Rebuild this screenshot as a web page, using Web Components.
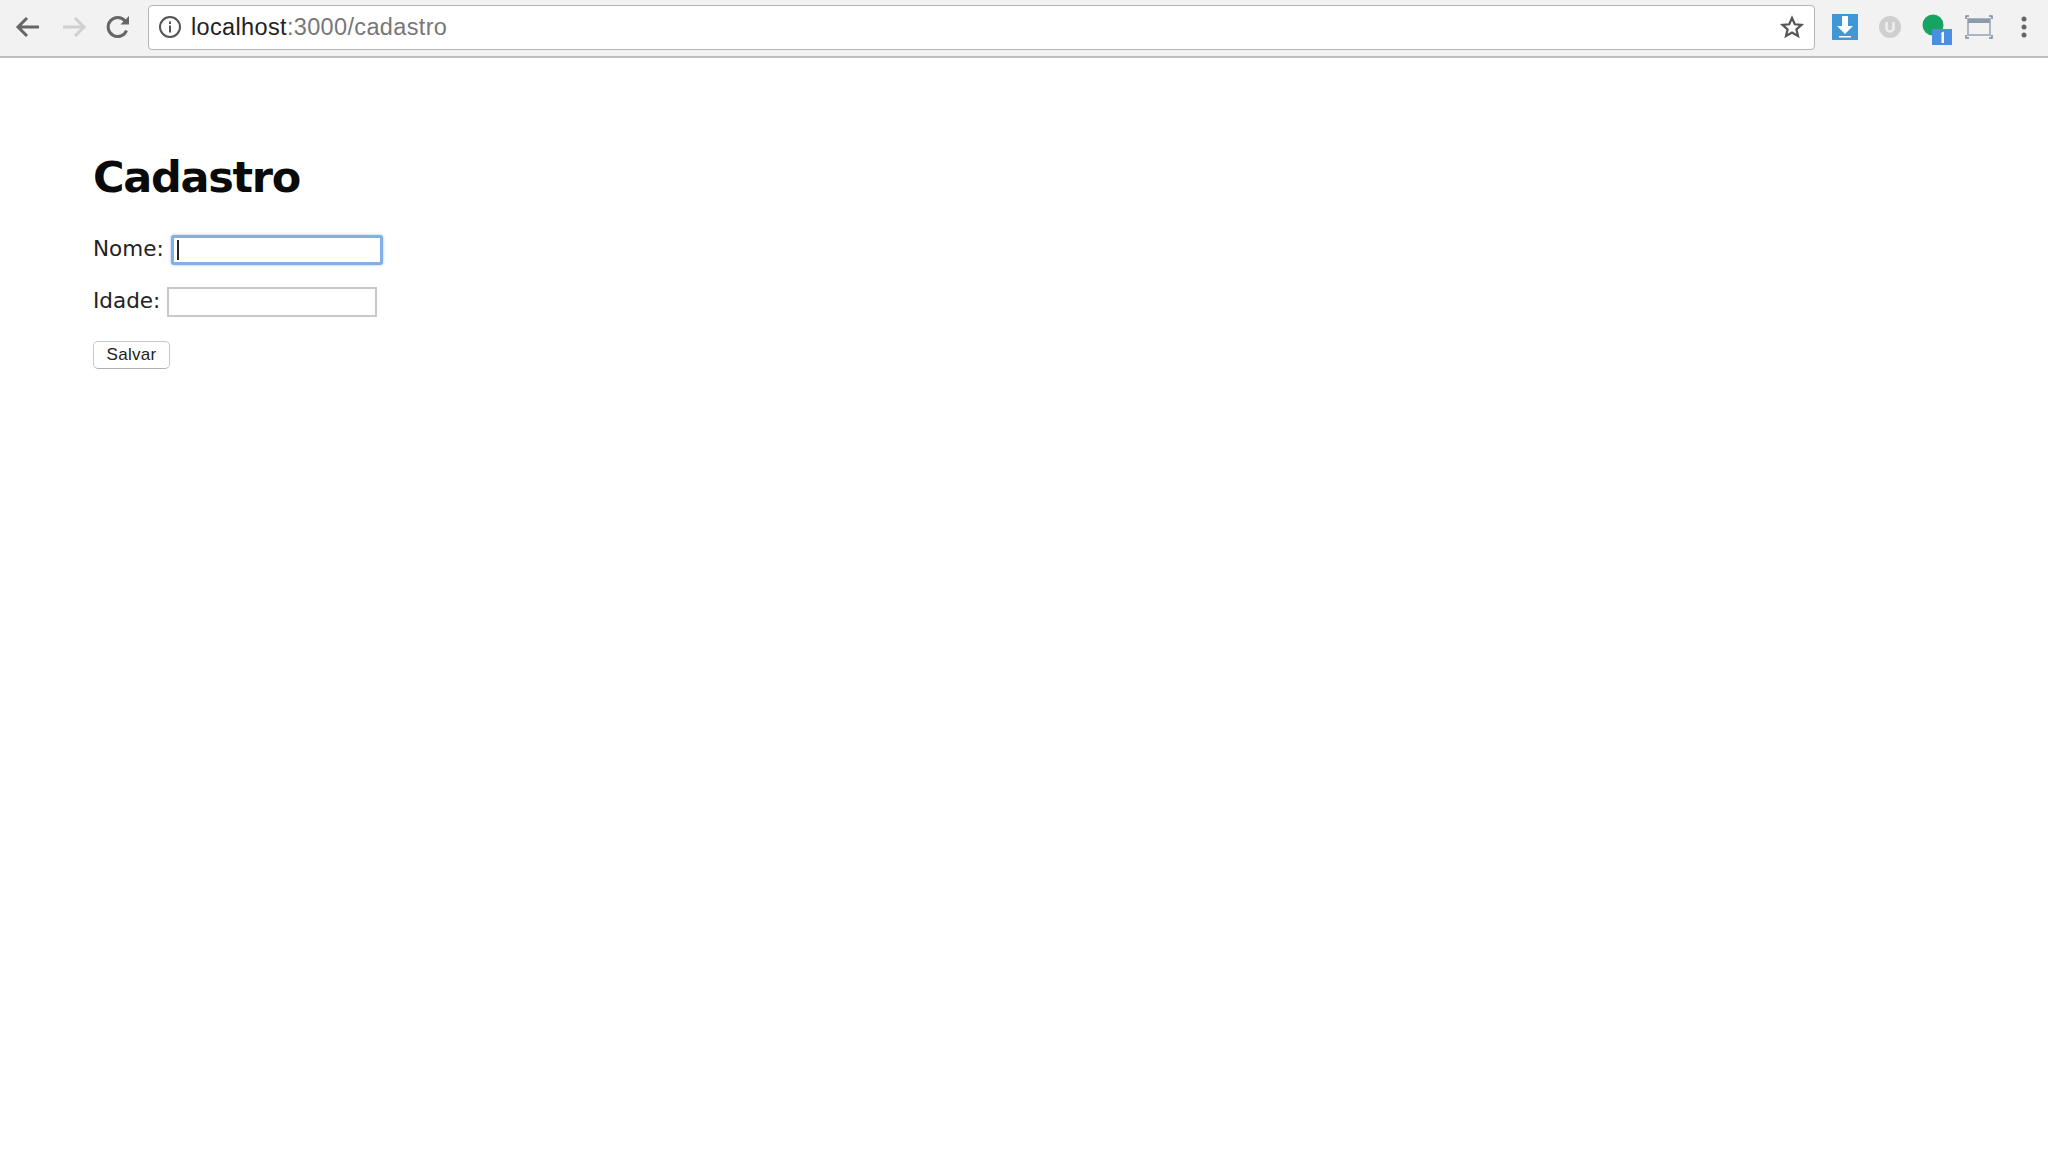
<!DOCTYPE html>
<html>
<head>
<meta charset="utf-8">
<title>Cadastro</title>
<style>
    html, body { margin: 0; background: #fff; }
    body { font-family: "DejaVu Sans", sans-serif; }
</style>
</head>
<body>
<browser-toolbar url-host="localhost" url-path=":3000/cadastro"></browser-toolbar>
<cadastro-page>
    <form-field label="Nome:" focused></form-field>
    <form-field label="Idade:"></form-field>
    <save-button>Salvar</save-button>
</cadastro-page>

<script>
const toolbarTemplate = document.createElement('template');
toolbarTemplate.innerHTML = `
<style>
    :host {
        display: flex;
        align-items: center;
        box-sizing: border-box;
        height: 58px;
        padding: 0 0 2px 0;
        background: #f2f2f2;
        border-bottom: 2px solid #bdbdbd;
    }
    .nav { display: flex; align-items: center; width: 148px; flex: none; padding-left: 12px; box-sizing: border-box; }
    .nav svg, .ext svg { display: block; flex: none; }
    .omnibox {
        flex: 1;
        height: 45px;
        box-sizing: border-box;
        display: flex;
        align-items: center;
        background: #fff;
        border: 1px solid #b5b5b5;
        border-radius: 4px;
        padding: 0 9px 0 9px;
    }
    .url {
        margin-left: 9px;
        flex: 1;
        font: 23.5px "Liberation Sans", Arial, sans-serif;
        letter-spacing: .35px;
        color: #777;
    }
    .url b { font-weight: normal; color: #222; }
    .ext { width: 233px; flex: none; display: flex; align-items: center; box-sizing: border-box; padding-left: 17px; }
</style>
<div class="nav">
    <svg width="28" height="28" viewBox="0 0 28 28" fill="none" stroke="#666" stroke-width="3"><path d="M27 14H7M15 5l-9 9 9 9"/></svg>
    <svg width="28" height="28" viewBox="0 0 28 28" fill="none" stroke="#d0d0d0" stroke-width="3" style="margin-left:21px"><path d="M2 14h20M14 5l9 9-9 9"/></svg>
    <svg width="28" height="28" viewBox="0 0 28 28" fill="none" stroke="#666" stroke-width="3" style="margin-left:15px"><path d="M22.500 17.500A9.500 9.500 0 1 1 21 8"/><path d="M25 3v8.500h-8.500z" fill="#666" stroke="none"/></svg>
</div>
<div class="omnibox">
    <svg width="24" height="24" viewBox="0 0 24 24" fill="none" stroke="#555" stroke-width="2"><circle cx="12" cy="12" r="10"/><path d="M12 10.500v7M12 6.500v2.500"/></svg>
    <span class="url"><b id="host"></b><span id="path"></span></span>
    <svg width="26" height="26" viewBox="0 0 26 26" fill="none" stroke="#555" stroke-width="2.200"><path d="M13 4l2.800 6.300 6.700.6-5.100 4.500 1.600 6.600L13 18.500l-6 3.500 1.600-6.600L3.500 10.900l6.700-.6z"/></svg>
</div>
<div class="ext">
    <svg width="26" height="26" viewBox="0 0 26 26"><rect width="26" height="26" fill="#3f97d8"/><path d="M10 2h6v10h5l-8 8-8-8h5z" fill="#fff"/><rect x="7" y="22" width="12" height="1.500" fill="#fff"/></svg>
    <svg width="24" height="24" viewBox="0 0 24 24" style="margin-left:20px"><circle cx="12" cy="12" r="11" fill="#cfcfcf"/><path d="M8.500 7v6a3.500 3.500 0 0 0 7 0V7" fill="none" stroke="#eee" stroke-width="2.500"/></svg>
    <svg width="30" height="31" viewBox="0 0 30 31" style="margin-left:20px;margin-top:4px"><circle cx="11" cy="11" r="10.500" fill="#17a463"/><rect x="10" y="15" width="20" height="16" fill="#4a90e2"/><path d="M19 19l3-1.500V29h-2.500V20.500z" fill="#fff"/></svg>
    <svg width="28" height="24" viewBox="0 0 28 24" style="margin-left:13px" fill="none"><rect x="3" y="4" width="22" height="16" stroke="#a9b6c6" stroke-width="2"/><rect x="3" y="4" width="22" height="4" fill="#8c9aab"/><path d="M1 4V1h3M24 1h3v3M1 20v3h3M24 23h3v-3" stroke="#7d8b9c" stroke-width="1.500"/></svg>
    <svg width="8" height="24" viewBox="0 0 8 24" style="margin-left:27px"><circle cx="4" cy="4" r="2.500" fill="#666"/><circle cx="4" cy="12" r="2.500" fill="#666"/><circle cx="4" cy="20" r="2.500" fill="#666"/></svg>
</div>
`;

class BrowserToolbar extends HTMLElement {
    constructor() {
        super();
        this._shadowRoot = this.attachShadow({ mode: 'open' });
        this._shadowRoot.appendChild(toolbarTemplate.content.cloneNode(true));
    }

    connectedCallback() {
        this._shadowRoot.querySelector('#host').textContent = this.getAttribute('url-host');
        this._shadowRoot.querySelector('#path').textContent = this.getAttribute('url-path');
    }
}

const pageTemplate = document.createElement('template');
pageTemplate.innerHTML = `
<style>
    :host { display: block; padding: 90px 0 0 93px; }
    h1 {
        margin: 0 0 29px 0;
        font: bold 43px/58px "DejaVu Sans", sans-serif;
        letter-spacing: -1.300px;
        color: #0a0a0a;
    }
    .fields { display: flex; flex-direction: column; align-items: flex-start; gap: 22px; }
</style>
<h1>Cadastro</h1>
<div class="fields"><slot></slot></div>
`;

class CadastroPage extends HTMLElement {
    constructor() {
        super();
        this.attachShadow({ mode: 'open' }).appendChild(pageTemplate.content.cloneNode(true));
    }
}

const fieldTemplate = document.createElement('template');
fieldTemplate.innerHTML = `
<style>
    :host { display: flex; align-items: center; height: 30px; }
    label { font: 21.5px "DejaVu Sans", sans-serif; color: #222; margin: 0 7px 3px 0; }
    .box {
        width: 210px;
        height: 30px;
        box-sizing: border-box;
        border: 2px solid #c8c8c8;
        background: #fff;
        display: flex;
        align-items: center;
        padding-left: 3px;
    }
    :host([focused]) .box {
        width: 212px;
        border: 3px solid #7fb0ea;
        border-radius: 3px;
        box-shadow: 0 0 3px #9cc3f2;
    }
    .caret { display: none; width: 2px; height: 20px; background: #222; }
    :host([focused]) .caret { display: block; }
</style>
<label></label>
<div class="box"><span class="caret"></span></div>
`;

class FormField extends HTMLElement {
    constructor() {
        super();
        this._shadowRoot = this.attachShadow({ mode: 'open' });
        this._shadowRoot.appendChild(fieldTemplate.content.cloneNode(true));
    }

    connectedCallback() {
        this._shadowRoot.querySelector('label').textContent = this.getAttribute('label');
    }
}

const buttonTemplate = document.createElement('template');
buttonTemplate.innerHTML = `
<style>
    :host {
        display: flex;
        align-items: center;
        justify-content: center;
        box-sizing: border-box;
        width: 77px;
        height: 28px;
        margin-top: 2px;
        background: #fff;
        border: 1px solid #c8c8c8;
        border-bottom-color: #b0b0b0;
        border-radius: 5px;
        font: 17px "Liberation Sans", Arial, sans-serif;
        letter-spacing: .3px;
        color: #222;
    }
</style>
<slot></slot>
`;

class SaveButton extends HTMLElement {
    constructor() {
        super();
        this.attachShadow({ mode: 'open' }).appendChild(buttonTemplate.content.cloneNode(true));
    }
}

window.customElements.define('browser-toolbar', BrowserToolbar);
window.customElements.define('cadastro-page', CadastroPage);
window.customElements.define('form-field', FormField);
window.customElements.define('save-button', SaveButton);
</script>
</body>
</html>
